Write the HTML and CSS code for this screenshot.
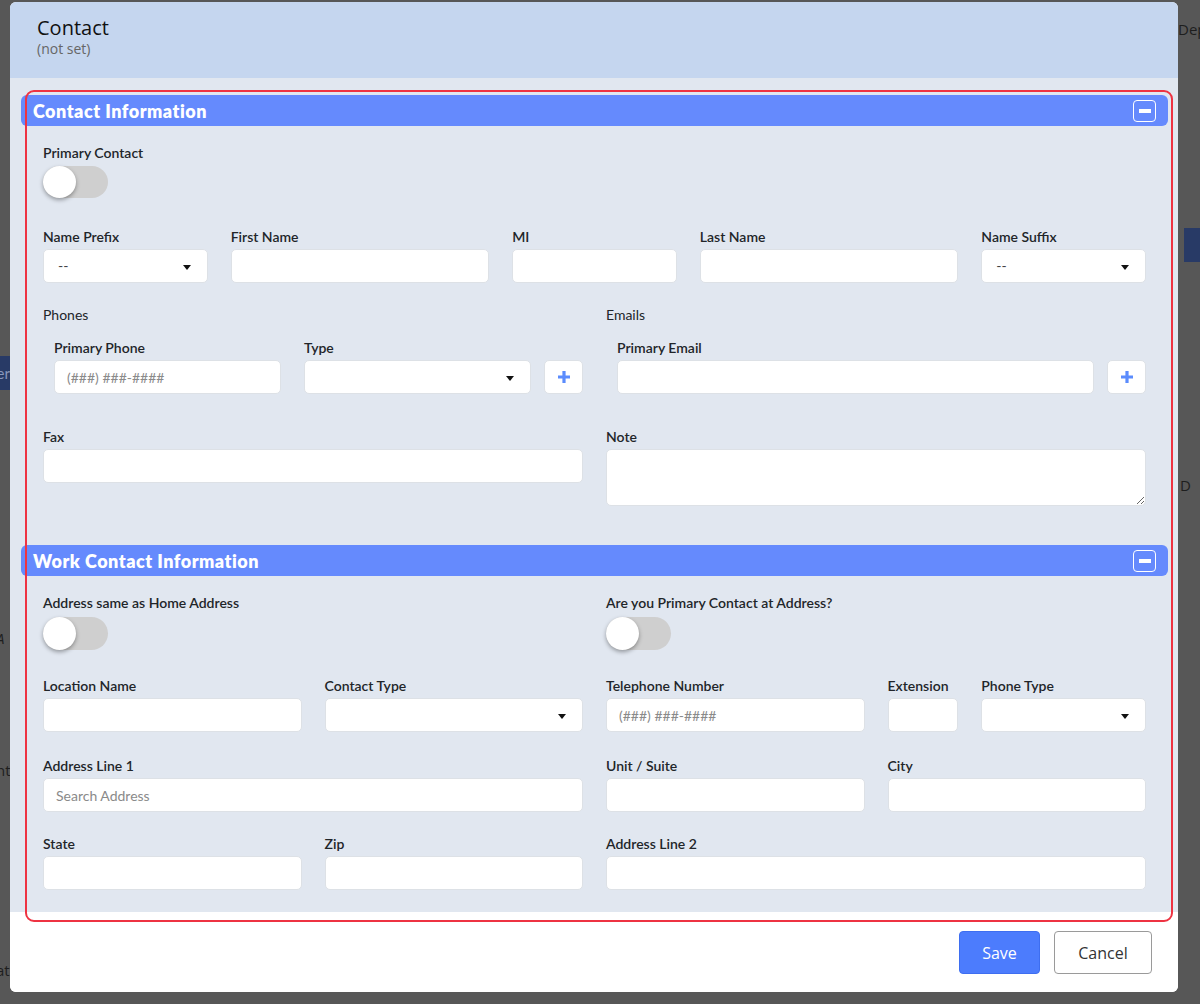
FILE: index.html
```html
<!DOCTYPE html>
<html>
  <head>
    <meta charset="utf-8" />
    <title>Contact</title>
    <meta name="viewport" content="width=device-width,initial-scale=1" />
    <link rel="stylesheet" href="styles.css">
  </head>

  <body>
    <!-- page behind the modal, greyed out -->
    <div class="backdrop">
      <span class="peek peek-dep">Dep</span>
      <span class="peek-bar peek-bar-right"></span>
      <span class="peek-bar peek-bar-left">er</span>
      <span class="peek peek-a">A</span>
      <span class="peek peek-nt">nt</span>
      <span class="peek peek-d">D</span>
      <span class="peek peek-at">at</span>
    </div>

    <div class="modal">
      <div class="modal-header">
        <h2>Contact</h2>
        <div class="subtitle">(not set)</div>
      </div>

      <div class="modal-body">
        <section class="panel">
          <div class="panel-head">
            <span>Contact Information</span>
            <button class="collapse-btn" type="button"><span></span></button>
          </div>
          <div class="panel-body">
            <div class="field">
              <label>Primary Contact</label>
              <span class="toggle"></span>
            </div>

            <div class="grid row-names">
              <div class="field span-2">
                <label>Name Prefix</label>
                <div class="select">--</div>
              </div>
              <div class="field span-3">
                <label>First Name</label>
                <input type="text">
              </div>
              <div class="field span-2">
                <label>MI</label>
                <input type="text">
              </div>
              <div class="field span-3">
                <label>Last Name</label>
                <input type="text">
              </div>
              <div class="field span-2">
                <label>Name Suffix</label>
                <div class="select">--</div>
              </div>
            </div>

            <div class="grid row-phones">
              <div class="span-6">
                <div class="group-title">Phones</div>
                <div class="multi">
                  <div class="field grow">
                    <label>Primary Phone</label>
                    <input type="text" placeholder="(###) ###-####">
                  </div>
                  <div class="field grow">
                    <label>Type</label>
                    <div class="select"></div>
                  </div>
                  <button class="add-btn" type="button">
                    <svg width="16" height="16" viewBox="0 0 16 16"><path d="M8 2v12M2 8h12" stroke="#5b8cfd" stroke-width="3.2" stroke-linecap="butt"/></svg>
                  </button>
                </div>
              </div>
              <div class="span-6">
                <div class="group-title">Emails</div>
                <div class="multi">
                  <div class="field grow">
                    <label>Primary Email</label>
                    <input type="text">
                  </div>
                  <button class="add-btn" type="button">
                    <svg width="16" height="16" viewBox="0 0 16 16"><path d="M8 2v12M2 8h12" stroke="#5b8cfd" stroke-width="3.2" stroke-linecap="butt"/></svg>
                  </button>
                </div>
              </div>
            </div>

            <div class="grid row-fax">
              <div class="field span-6">
                <label>Fax</label>
                <input class="fax-input" type="text">
              </div>
              <div class="field span-6">
                <label>Note</label>
                <textarea></textarea>
              </div>
            </div>
          </div>
        </section>

        <section class="panel">
          <div class="panel-head">
            <span>Work Contact Information</span>
            <button class="collapse-btn" type="button"><span></span></button>
          </div>
          <div class="panel-body">
            <div class="grid">
              <div class="field span-6">
                <label>Address same as Home Address</label>
                <span class="toggle toggle-work"></span>
              </div>
              <div class="field span-6">
                <label>Are you Primary Contact at Address?</label>
                <span class="toggle toggle-work"></span>
              </div>
            </div>

            <div class="grid row-work">
              <div class="field span-3">
                <label>Location Name</label>
                <input type="text">
              </div>
              <div class="field span-3">
                <label>Contact Type</label>
                <div class="select"></div>
              </div>
              <div class="field span-3">
                <label>Telephone Number</label>
                <input type="text" placeholder="(###) ###-####">
              </div>
              <div class="field span-1">
                <label>Extension</label>
                <input type="text">
              </div>
              <div class="field span-2">
                <label>Phone Type</label>
                <div class="select"></div>
              </div>
            </div>

            <div class="grid row-addr">
              <div class="field span-6">
                <label>Address Line 1</label>
                <input type="text" placeholder="Search Address">
              </div>
              <div class="field span-3">
                <label>Unit / Suite</label>
                <input type="text">
              </div>
              <div class="field span-3">
                <label>City</label>
                <input type="text">
              </div>
            </div>

            <div class="grid row-state">
              <div class="field span-3">
                <label>State</label>
                <input type="text">
              </div>
              <div class="field span-3">
                <label>Zip</label>
                <input type="text">
              </div>
              <div class="field span-6">
                <label>Address Line 2</label>
                <input type="text">
              </div>
            </div>
          </div>
        </section>
      </div>

      <div class="modal-footer">
        <button class="btn btn-primary" type="button">Save</button>
        <button class="btn btn-default" type="button">Cancel</button>
      </div>

      <!-- red highlight drawn over the form -->
      <div class="highlight"></div>
    </div>
  </body>
</html>
```

FILE: styles.css
```css
body {
  margin: 0;
  padding: 2px 22px 0 10px;
  background: #575757;
  font-family: Lato, 'Open Sans', sans-serif;
  color: #212529;
  position: relative;
  min-height: 1002px;
}

.backdrop {
  position: absolute;
  inset: 0;
  overflow: hidden;
}

.peek {
  position: absolute;
  font-family: 'Open Sans', sans-serif;
  font-size: 15px;
  color: #1e1e1e;
}

.peek-dep { left: 1178px; top: 19px; }
.peek-a { left: -4px; top: 628px; font-style: italic; }
.peek-nt { left: -4px; top: 760px; }
.peek-d { left: 1180px; top: 475px; }
.peek-at { left: -4px; top: 960px; }

.peek-bar {
  position: absolute;
  background: #283a66;
}

.peek-bar-right {
  left: 1184px;
  top: 228px;
  width: 30px;
  height: 34px;
}

.peek-bar-left {
  left: -10px;
  top: 356px;
  width: 20px;
  height: 34px;
  color: #8a98bd;
  font-size: 15px;
  line-height: 34px;
  text-align: right;
}

.modal {
  position: relative;
  width: 1168px;
  background: #fff;
  border-radius: 6px;
  overflow: hidden;
}

.modal-header {
  background: #c5d6ef;
  height: 76px;
  padding: 13px 27px 0;
  box-sizing: border-box;
}

.modal-header h2 {
  margin: 0;
  font-family: 'Open Sans', sans-serif;
  font-weight: 400;
  font-size: 20px;
  line-height: 25px;
  color: #111;
}

.modal-header .subtitle {
  font-family: 'Open Sans', sans-serif;
  font-size: 14px;
  line-height: 18px;
  color: #666;
}

.modal-body {
  background: #e1e7f0;
  padding: 17px 10px 0 11px;
}

.panel {
  margin-bottom: 18px;
}

.panel:last-child {
  margin-bottom: 0;
}

.panel-head {
  display: flex;
  align-items: center;
  justify-content: space-between;
  height: 31px;
  padding: 0 12px;
  background: #658afd;
  border-radius: 6px;
  color: #fff;
  font-weight: 800;
  font-size: 18px;
  letter-spacing: 0.5px;
}

.collapse-btn {
  width: 23px;
  height: 22px;
  padding: 0;
  border: 1.5px solid #fff;
  border-radius: 4px;
  background: transparent;
  display: flex;
  align-items: center;
  justify-content: center;
}

.collapse-btn span {
  display: block;
  width: 12px;
  height: 4px;
  background: #fff;
}

.panel-body {
  padding: 18px 22px 21px;
}

.panel:last-child .panel-body {
  padding-bottom: 22px;
}

.grid {
  display: grid;
  grid-template-columns: repeat(12, 1fr);
  column-gap: 23px;
}

.span-1 { grid-column: span 1; }
.span-2 { grid-column: span 2; }
.span-3 { grid-column: span 3; }
.span-6 { grid-column: span 6; }

.row-names { margin-top: 30px; }
.row-phones { margin-top: 23px; }
.row-fax { margin-top: 34px; }
.row-work { margin-top: 27px; }
.row-addr { margin-top: 25px; }
.row-state { margin-top: 23px; }

.field label {
  display: block;
  font-size: 14px;
  line-height: 17px;
  font-weight: 600;
  margin-bottom: 4px;
  white-space: nowrap;
}

.group-title {
  font-size: 14px;
  line-height: 17px;
  margin-bottom: 16px;
}

.multi {
  display: flex;
  align-items: flex-end;
  gap: 23px;
  padding-left: 11px;
}

.multi .grow {
  flex: 1;
}

.multi .add-btn {
  margin-left: -10px;
}

.field input,
.field textarea,
.select {
  display: block;
  width: 100%;
  height: 34px;
  box-sizing: border-box;
  border: 1px solid #dde1e6;
  border-radius: 5px;
  background: #fff;
  font-family: Lato, sans-serif;
  font-size: 14px;
  color: #333;
  padding: 0 12px;
  margin: 0;
}

.field input::placeholder {
  color: #8a8a8a;
}

.field .fax-input {
  margin-top: 2px;
}

.field textarea {
  height: 57px;
  padding: 6px 12px;
  resize: vertical;
}

.select {
  position: relative;
  line-height: 32px;
  padding-left: 14px;
  color: #444;
}

.select::after {
  content: "";
  position: absolute;
  right: 16px;
  top: 15px;
  border-left: 4px solid transparent;
  border-right: 4px solid transparent;
  border-top: 5px solid #111;
}

.add-btn {
  width: 39px;
  height: 34px;
  flex: none;
  border: 1px solid #dde1e6;
  border-radius: 5px;
  background: #fff;
  padding: 0;
  display: flex;
  align-items: center;
  justify-content: center;
}

.toggle {
  display: block;
  position: relative;
  width: 65px;
  height: 32px;
  margin-top: 5px;
  border-radius: 17px;
  background: #cfcfcf;
}

.toggle-work {
  height: 33px;
  margin-top: 6px;
}

.toggle::before {
  content: "";
  position: absolute;
  left: 0;
  top: 0;
  width: 33px;
  height: 100%;
  border-radius: 50%;
  background: #fff;
  box-shadow: 0 2px 4px rgba(0, 0, 0, 0.35);
}

.modal-footer {
  display: flex;
  justify-content: flex-end;
  gap: 14px;
  padding: 19px 26px 18px;
  background: #fff;
}

.btn {
  height: 43px;
  border-radius: 4px;
  font-family: 'Open Sans', sans-serif;
  font-size: 16px;
  padding: 0;
  cursor: pointer;
}

.btn-primary {
  width: 81px;
  background: #4c7cfd;
  border: 1px solid #3e6ef0;
  color: #fff;
}

.btn-default {
  width: 98px;
  background: #fff;
  border: 1px solid #9a9a9a;
  color: #333;
}

.highlight {
  position: absolute;
  left: 15px;
  top: 88px;
  width: 1148px;
  height: 832px;
  box-sizing: border-box;
  border: 2.5px solid #ee3342;
  border-radius: 9px;
  pointer-events: none;
}
```
